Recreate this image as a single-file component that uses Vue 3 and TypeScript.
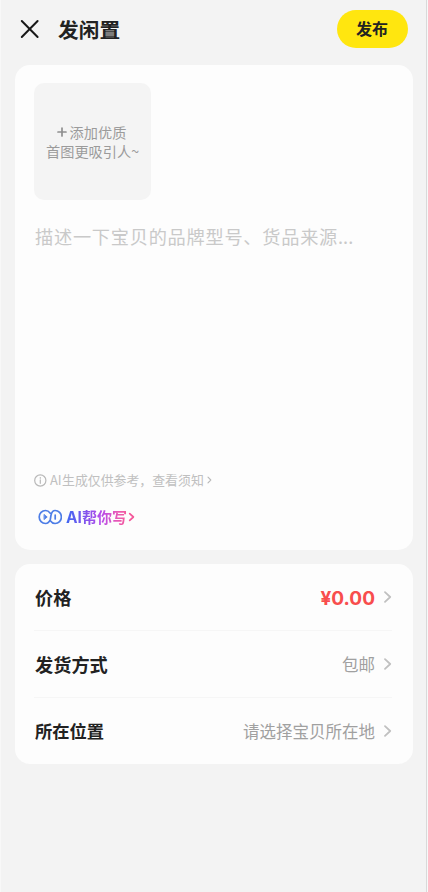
<script setup lang="ts">
interface Row {
  key: string
  label: string
  value: string
}

const rows: Row[] = [
  { key: 'price', label: '价格', value: '¥0.00' },
  { key: 'shipping', label: '发货方式', value: '包邮' },
  { key: 'place', label: '所在位置', value: '请选择宝贝所在地' },
]
</script>

<template>
  <main class="page">
    <header class="bar">
      <svg class="close" viewBox="0 0 20 20" width="20" height="20">
        <path d="M1.8 2 17.6 18M17.6 2 1.8 18" />
      </svg>
      <h1 class="title">发闲置</h1>
      <button class="publish">发布</button>
    </header>

    <section class="card editor">
      <div class="upload">
        <div class="upload-line">
          <svg class="plus" viewBox="0 0 10 10" width="10" height="10"><path d="M5 1v8M1 5h8" /></svg>
          <span>添加优质</span>
        </div>
        <div class="upload-line">首图更吸引人~</div>
      </div>
      <p class="placeholder">描述一下宝贝的品牌型号、货品来源<span class="dots">...</span></p>
      <div class="notice">
        <svg class="info" viewBox="0 0 13 13" width="13" height="13">
          <circle cx="6.3" cy="6.5" r="5.6" />
          <path d="M6.3 5.9v3.4M6.3 3.6v.6" />
        </svg>
        <span class="notice-ai">AI</span><span>生成仅供参考，查看须知</span>
        <svg class="mini" viewBox="0 0 5 8" width="5" height="8"><path d="M1 1.2 3.8 4 1 6.8" /></svg>
      </div>
      <div class="assist">
        <svg class="logo" viewBox="0 0 24 16" width="24" height="16">
          <path d="M12.3 4.2C11 2.5 9.400 1.500 7.500 1.500A6.300 6.500 0 0 0 7.500 14.500C10 14.500 11.500 12.500 12.300 10.500L13 6.200C13.600 3.500 15 1.500 17.100 1.500A6.300 6.500 0 0 1 17.100 14.500C15.200 14.500 13.500 13.500 12.300 11.800" />
          <path class="play" d="M6.300 5.600 9.200 8 6.300 10.400Z" />
          <path d="M17.200 6v4" />
        </svg>
        <span class="assist-text"><span class="assist-ai">AI</span>帮你写</span>
        <svg class="pink" viewBox="0 0 7 10" width="7" height="10"><path d="M1.7 1.6 5.4 5 1.7 8.4" /></svg>
      </div>
    </section>

    <section class="card options">
      <div v-for="row in rows" :key="row.key" class="row" :class="row.key">
        <span class="label">{{ row.label }}</span>
        <span class="value">{{ row.value }}</span>
        <svg class="arrow" viewBox="0 0 8 14" width="8" height="14"><path d="M1 2.2 6.2 7 1 11.8" /></svg>
      </div>
    </section>
  </main>
</template>

<style>
body {
  background: #f8f8f8;
}
</style>

<style scoped>
.page {
  box-sizing: border-box;
  width: 427px;
  height: 892px;
  padding: 0 13.5px 0 15px;
  border-right: 1px solid #d9d9d9;
  box-shadow: inset 1px 0 #f8f8f8;
  background: #f3f3f3;
  font-family: "Noto Sans CJK SC", sans-serif;
  color: #222;
}
svg {
  flex: none;
  fill: none;
  stroke-linecap: round;
  stroke-linejoin: round;
}
.bar {
  display: flex;
  align-items: center;
  height: 58px;
  padding: 0 4.5px 0 5px;
  margin-bottom: 7px;
}
.close {
  stroke: #181818;
  stroke-width: 2;
}
.title {
  margin: 0 auto 0 18px;
  padding-bottom: 1px;
  font-size: 20.7px;
  line-height: 30px;
  font-weight: 700;
}
.publish {
  width: 71px;
  height: 38px;
  padding: 0 1px 2px 0;
  border: 0;
  border-radius: 19px;
  background: #ffe60f;
  color: #222;
  font: 700 16px/36px "Noto Sans CJK SC", sans-serif;
}
.card {
  box-sizing: border-box;
  border-radius: 15px;
  background: #fdfdfd;
}
.editor {
  display: flex;
  flex-direction: column;
  height: 485px;
  padding: 18px 19px 0;
}
.upload {
  box-sizing: border-box;
  display: flex;
  flex-direction: column;
  align-items: center;
  justify-content: center;
  width: 117px;
  height: 117px;
  border-radius: 10px;
  background: #f4f4f4;
  color: #9b9b9b;
  font-size: 14.2px;
  line-height: 19px;
}
.upload-line {
  display: flex;
  align-items: center;
  gap: 3px;
}
.upload-line:first-child {
  margin-left: -2px;
}
.plus {
  stroke: #8f8f8f;
  stroke-width: 1.7;
}
.placeholder {
  margin: 22px 0 0 1px;
  font-size: 18.2px;
  line-height: 28px;
  letter-spacing: 0.75px;
  font-weight: 400;
  color: #c9c9c9;
  white-space: nowrap;
}
.dots {
  letter-spacing: 0;
}
.notice {
  display: flex;
  align-items: center;
  height: 20px;
  margin-top: 220px;
  color: #c0c0c0;
  font-size: 12.9px;
  line-height: 20px;
}
.notice-ai {
  width: 12px;
  margin-left: 3px;
}
.info {
  stroke: #b8b8b8;
  stroke-width: 1.2;
}
.mini {
  margin-left: 3px;
  stroke: #b8b8b8;
  stroke-width: 1.1;
}
.assist {
  display: flex;
  align-items: center;
  height: 24px;
  margin: 15px 0 0 4px;
}
.logo {
  stroke: #4d7de6;
  stroke-width: 1.7;
}
.play {
  fill: #4d7de6;
  stroke-width: 0.8;
}
.assist-text {
  margin-left: 4px;
  font-size: 15px;
  line-height: 24px;
  font-weight: 700;
  color: transparent;
  background: linear-gradient(90deg, #3f68f2, #7357ed 25%, #b64bea 58%, #e958b5 85%, #f45c9a);
  background-clip: text;
}
.assist-ai {
  display: inline-block;
  width: 16px;
  font-family: Inter, sans-serif;
  font-size: 15.5px;
}
.pink {
  margin-left: 1px;
  stroke: #f4579a;
  stroke-width: 1.7;
}
.options {
  height: 200px;
  margin-top: 14px;
  padding: 0 20.5px 0 19px;
}
.row {
  box-sizing: border-box;
  display: flex;
  align-items: center;
  height: 67px;
  border-bottom: 1px solid #f6f6f6;
}
.row:last-child {
  height: 66px;
  border-bottom: 0;
}
.label {
  margin: 0 auto 0 1px;
  font-size: 18.2px;
  font-weight: 700;
}
.place .label {
  padding-bottom: 2px;
  font-size: 17.3px;
}
.value {
  margin-right: 1px;
  color: #a0a0a0;
  font-size: 16.5px;
}
.price .value {
  padding-top: 2px;
  color: #f84d4d;
  font: 700 19px Inter, "Noto Sans CJK SC", sans-serif;
}
.arrow {
  margin-left: 8px;
  stroke: #c0c0c0;
  stroke-width: 1.8;
}
</style>
